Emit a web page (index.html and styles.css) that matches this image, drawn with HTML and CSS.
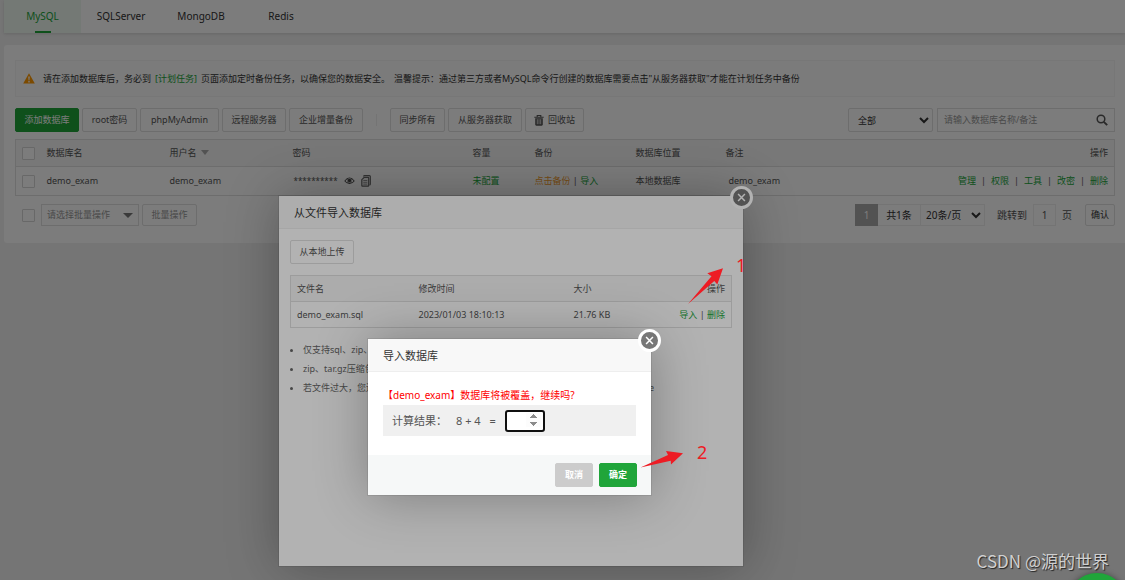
FILE: index.html
```html
<!DOCTYPE html>
<html lang="zh-CN">
<head>
<meta charset="utf-8">
<title>数据库</title>
<link rel="stylesheet" href="styles.css">
</head>
<body>
<div class="page">
  <nav class="tabs">
    <button class="tab tab-active">MySQL</button>
    <button class="tab">SQLServer</button>
    <button class="tab">MongoDB</button>
    <button class="tab">Redis</button>
  </nav>

  <main class="card">
    <div class="notice">
      <svg class="warn" viewBox="0 0 12 11"><path d="M6 .3 11.8 10.6H.2z" fill="#ff9900"/><path d="M5.2 3.6h1.6L6.4 7.4h-.8zM5.3 8.1h1.4v1.3H5.3z" fill="#fff"/></svg>
      <span>请在添加数据库后，务必到</span>
      <a class="link" href="#">[计划任务]</a>
      <span>页面添加定时备份任务，以确保您的数据安全。</span>
      <span>温馨提示：通过第三方或者MySQL命令行创建的数据库需要点击"从服务器获取"才能在计划任务中备份</span>
    </div>

    <div class="toolbar">
      <div class="actions">
        <button class="btn btn-primary">添加数据库</button>
        <button class="btn">root密码</button>
        <button class="btn">phpMyAdmin</button>
        <button class="btn">远程服务器</button>
        <button class="btn">企业增量备份</button>
        <span class="divider"></span>
        <button class="btn">同步所有</button>
        <button class="btn">从服务器获取</button>
        <button class="btn"><svg class="trash" viewBox="0 0 10 11"><path d="M3.2 1.8V.5h3.6v1.3M.3 2.3h9.4" fill="none" stroke="#555" stroke-width="1.1"/><path d="M1.2 3.2h7.6v6.4q0 1.1-1.1 1.1H2.3q-1.1 0-1.1-1.1z" fill="#555"/><path d="M3.3 4.2v5M5 4.2v5M6.7 4.2v5" stroke="#fff" stroke-width=".7"/></svg>回收站</button>
      </div>
      <div class="filters">
        <select class="select filter-type" aria-label="类型"><option>全部</option></select>
        <div class="search">
          <input type="text" aria-label="搜索" placeholder="请输入数据库名称/备注">
          <button class="search-btn" aria-label="搜索"><svg viewBox="0 0 12 12"><circle cx="5" cy="5" r="3.8" fill="none" stroke="#555" stroke-width="1.5"/><path d="m7.8 7.8 3.4 3.4" stroke="#555" stroke-width="1.9"/></svg></button>
        </div>
      </div>
    </div>

    <table class="grid main-grid">
      <colgroup><col class="c-check"><col class="c-name"><col class="c-name"><col class="c-pass"><col class="c-quota"><col class="c-backup"><col class="c-place"><col class="c-note"><col></colgroup>
      <thead>
        <tr><th><input type="checkbox" class="check" aria-label="全选"></th><th>数据库名</th><th>用户名<span class="sort"></span></th><th>密码</th><th>容量</th><th>备份</th><th>数据库位置</th><th>备注</th><th class="right">操作</th></tr>
      </thead>
      <tbody>
        <tr>
          <td><input type="checkbox" class="check" aria-label="选择 demo_exam"></td>
          <td>demo_exam</td>
          <td>demo_exam</td>
          <td><div class="password"><span class="stars">**********</span>
            <svg class="eye" viewBox="0 0 12 10"><path d="M.3 5Q6-2.600 11.700 5 6 11.800.3 5z" fill="#444"/><circle cx="6" cy="4.500" r="2.500" fill="#fff"/><circle cx="6" cy="4.500" r="1.900" fill="#444"/><path d="M1.600 5.100Q2.300 3.700 3.500 3 2.900 5 4 6.800 2.500 6.300 1.600 5.100zM10.400 5.100Q9.700 3.700 8.500 3 9.100 5 8 6.800 9.500 6.300 10.400 5.100z" fill="#fff"/></svg>
            <svg class="copy" viewBox="0 0 10 12"><path d="M2.500 1.500q0-.9.900-.9h5q.9 0 .9.900v7.400q0 .9-.9.900" fill="none" stroke="#666" stroke-width="1.200"/><path d="M3.200 2.300h3.900q.6 0 .6.600v7.700q0 .6-.6.600H1.400q-.6 0-.6-.6V4.700z" fill="#eee" stroke="#666" stroke-width="1.200"/><path d="M2.300 5.500h4M2.300 7.300h4M2.300 9.100h4" stroke="#777" stroke-width=".8"/></svg></div></td>
          <td><a class="link" href="#">未配置</a></td>
          <td><a class="link link-warn" href="#">点击备份</a> | <a class="link" href="#">导入</a></td>
          <td>本地数据库</td>
          <td class="note">demo_exam</td>
          <td><div class="ops"><a class="link" href="#">管理</a><i>|</i><a class="link" href="#">权限</a><i>|</i><a class="link" href="#">工具</a><i>|</i><a class="link" href="#">改密</a><i>|</i><a class="link" href="#">删除</a></div></td>
        </tr>
      </tbody>
    </table>

    <div class="footer">
      <div class="batch">
        <input type="checkbox" class="check" aria-label="全选">
        <button class="batch-select">请选择批量操作<span class="sort"></span></button>
        <button class="btn batch-btn">批量操作</button>
      </div>
      <div class="pager">
        <span class="page-current">1</span>
        <span class="page-total">共1条</span>
        <select class="select page-size" aria-label="每页条数"><option>20条/页</option></select>
        <label class="jump">跳转到 <input type="text" value="1"> 页</label>
        <button class="btn confirm">确认</button>
      </div>
    </div>
  </main>

  <div class="bubble"></div>
  <div class="shade"></div>

  <section class="modal import-modal">
    <button class="close" aria-label="关闭"><svg viewBox="0 0 10 10"><path d="m1.200 1.200 7.600 7.600m0-7.600L1.200 8.800" stroke="#fff" stroke-width="1.700"/></svg></button>
    <h2 class="modal-title">从文件导入数据库</h2>
    <div class="import-body">
      <button class="btn upload">从本地上传</button>
      <table class="grid file-grid">
        <colgroup><col class="f-name"><col class="f-time"><col class="f-size"><col></colgroup>
        <thead><tr><th>文件名</th><th>修改时间</th><th>大小</th><th class="right">操作</th></tr></thead>
        <tbody><tr><td>demo_exam.sql</td><td>2023/01/03 18:10:13</td><td>21.76 KB</td><td class="right"><a class="link" href="#">导入</a> | <a class="link" href="#">删除</a></td></tr></tbody>
      </table>
      <ul class="tips">
        <li>仅支持sql、zip、sql.gz</li>
        <li>zip、tar.gz压缩包结构：test.zip压缩包内必须包含test.sql</li>
        <li><div class="tip-path"><span>若文件过大，您还可以使用SFTP工具，将数据库文件上传到</span><span>/www/backup/database</span></div></li>
      </ul>
    </div>
  </section>

  <div class="shade"></div>

  <section class="modal confirm-modal">
    <button class="close" aria-label="关闭"><svg viewBox="0 0 10 10"><path d="m1.200 1.200 7.600 7.600m0-7.600L1.200 8.800" stroke="#fff" stroke-width="1.700"/></svg></button>
    <h2 class="modal-title">导入数据库</h2>
    <div class="confirm-body">
      <p class="danger">【demo_exam】数据库将被覆盖，继续吗?</p>
      <label class="sum"><span>计算结果：</span><span>8 + 4</span><span>=</span><input type="number" autofocus></label>
    </div>
    <div class="confirm-foot">
      <button class="btn btn-cancel">取消</button>
      <button class="btn btn-ok">确定</button>
    </div>
  </section>

  <svg class="arrow arrow-one" viewBox="0 0 36 38"><path d="M0 36 23.500 8.300 19.300 5.300 35 .3 29.300 16.500 26.300 13z" fill="#ed1c24"/></svg>
  <span class="mark mark-one">1</span>
  <svg class="arrow arrow-two" viewBox="0 0 44 18"><path d="M.5 16.500 28 4 26 0 43 2.200 31 13.500 30.700 9.700z" fill="#ed1c24"/></svg>
  <span class="mark mark-two">2</span>
  <span class="watermark">CSDN @源的世界</span>
</div>
</body>
</html>
```
FILE: styles.css
```css
* { box-sizing: border-box; }

body {
  margin: 0;
  background: #f1f1f1;
  color: #555;
  font: 9px/18px "Noto Sans", "Noto Sans CJK SC", sans-serif;
}

button, input, select { font: inherit; color: inherit; margin: 0; }
h2, p, ul { margin: 0; padding: 0; }
a { text-decoration: none; }

.page { position: relative; min-height: 100vh; overflow: hidden; }

.tabs {
  display: flex;
  margin-left: 4px;
  background: #fff;
  box-shadow: 0 1px 3px rgba(0, 0, 0, .12);
}
.tab {
  position: relative;
  min-width: 80px;
  height: 33px;
  padding: 0 0 2px;
  border: 0;
  background: none;
  color: #333;
  font-size: 10px;
}
.tab-active { min-width: 77px; background: #eff9f1; color: #20a53a; }
.tab-active::after {
  content: "";
  position: absolute;
  left: 50%;
  bottom: 0;
  width: 16px;
  height: 2px;
  margin-left: -8px;
  background: #20a53a;
}

.card {
  margin: 12px 0 0 4px;
  padding: 15px 10px 17px 11px;
  border-radius: 3px 0 0 3px;
  background: #fff;
}

.notice {
  display: flex;
  align-items: center;
  gap: 4px;
  min-height: 37px;
  padding: 0 7px;
  border: 1px solid #f5f5f5;
  background: #fdfdfd;
  color: #333;
  white-space: nowrap;
}
.warn { width: 12px; height: 11px; margin-right: 4px; }
.link { color: #20a53a; }
.link-warn { color: #f19b2c; }

.toolbar { display: flex; justify-content: space-between; margin-top: 11px; }
.actions {
  display: grid;
  grid-template-columns: 64px 55px 79px 64px 74px 21px 55px 74px 59px;
  gap: 3px;
}
.btn {
  display: inline-flex;
  align-items: center;
  justify-content: center;
  height: 24px;
  padding: 0;
  border: 1px solid #e0e0e0;
  border-radius: 2px;
  background: #fff;
  white-space: nowrap;
}
.btn-primary { border-color: #20a53a; background: #20a53a; color: #fff; }
.divider { width: 1px; height: 12px; margin: 6px 0 0 10px; background: #eee; }
.trash { width: 10px; height: 11px; margin-right: 4px; }

.filters { display: flex; gap: 4px; }
.select {
  height: 24px;
  padding: 0 2px 0 5px;
  border: 1px solid #e0e0e0;
  background: #fff;
  color: #333;
}
.filter-type { width: 85px; border-radius: 2px; }
.search { display: flex; width: 178px; height: 24px; border: 1px solid #e0e0e0; }
.search input { flex: 1; min-width: 0; padding: 0 6px; border: 0; background: none; outline: 0; }
.search input::placeholder { color: #999; }
.search-btn { display: flex; align-items: center; padding: 0 6px; border: 0; background: none; }
.search-btn svg { width: 12px; height: 12px; }

.grid {
  width: 100%;
  border: 1px solid #e0e0e0;
  border-collapse: collapse;
  table-layout: fixed;
}
.grid th { height: 27px; background: #f6f6f6; font-weight: 400; text-align: left; }
.grid th, .grid td { padding: 0 6px 0 5px; border-bottom: 1px solid #e0e0e0; white-space: nowrap; }
.grid td { height: 29px; }
.grid .right { text-align: right; }
.main-grid { margin-top: 7px; }
.c-check { width: 26px; }
.c-name { width: 123px; }
.c-pass { width: 180px; }
.c-quota { width: 62px; }
.c-backup { width: 101px; }
.c-place { width: 90px; }
.c-note { width: 150px; }
.grid .note { padding-left: 8px; }

.check {
  appearance: none;
  display: block;
  width: 13px;
  height: 13px;
  border: 1px solid #d6d6d6;
  border-radius: 1px;
  background: #fff;
}
.grid .check { margin-left: 1px; }
.sort {
  display: inline-block;
  margin-left: 4px;
  border: 4px solid transparent;
  border-top: 5px solid #aaa;
  border-bottom: 0;
  vertical-align: 1px;
}
.password { display: flex; align-items: center; gap: 6px; padding-left: 1px; }
.stars { height: 18px; font-size: 8px; }
.eye { width: 11px; height: 10px; }
.copy { width: 10px; height: 12px; }
.ops { display: flex; justify-content: flex-end; gap: 5px; }
.ops i { font-style: normal; }

.footer { display: flex; justify-content: space-between; margin-top: 8px; }
.batch { display: flex; align-items: center; gap: 3px; padding-left: 7px; color: #999; }
.batch-select {
  display: flex;
  align-items: center;
  justify-content: space-between;
  width: 98px;
  height: 22px;
  margin-left: 3px;
  padding: 0 5px;
  border: 1px solid #e0e0e0;
  background: #fff;
}
.batch-select .sort { border-width: 5px 5px 0; border-top-color: #777; }
.batch-btn { width: 55px; height: 22px; }
.pager { display: flex; align-items: center; font-size: 10px; color: #333; }
.pager > * { height: 22px; line-height: 20px; }
.page-current { width: 23px; border: 1px solid #aaa; background: #aaa; color: #fff; text-align: center; }
.page-total { width: 42px; border: 1px solid #f0f0f0; border-width: 1px 0; text-align: center; }
.page-size { width: 65px; padding: 0 0 0 1px; border-color: #eee; }
.jump { display: flex; align-items: center; gap: 6px; margin: 0 13px 0 12px; color: #555; }
.jump input {
  width: 23px;
  height: 22px;
  padding: 0;
  border: 1px solid #eee;
  background: none;
  text-align: center;
}
.confirm { width: 30px; font-size: 9px; }

.bubble {
  position: absolute;
  z-index: 3;
  right: -2px;
  top: 573px;
  width: 60px;
  height: 60px;
  border-radius: 50%;
  background: #20a53a;
  box-shadow: 0 0 6px rgba(0, 0, 0, .4);
}

.shade { position: absolute; inset: 0; background: rgba(0, 0, 0, .3); }

.modal {
  position: absolute;
  background: #fff;
  box-shadow: 0 0 0 1px rgba(0, 0, 0, .08), 1px 1px 50px rgba(0, 0, 0, .3);
}
.import-modal { left: 279px; top: 196px; width: 464px; min-height: 370px; }
.confirm-modal { left: 368px; top: 339px; width: 283px; }
.modal-title {
  height: 33px;
  padding: 0 15px;
  border-bottom: 1px solid #eee;
  background: #f8f8f8;
  color: #333;
  font-size: 11px;
  font-weight: 400;
  line-height: 33px;
}
.close {
  position: absolute;
  top: -10px;
  right: -10px;
  display: flex;
  align-items: center;
  justify-content: center;
  width: 23px;
  height: 23px;
  padding: 0;
  border: 3px solid #fff;
  border-radius: 50%;
  background: #777;
}
.close svg { width: 9px; height: 9px; }

.import-body { padding: 11px; }
.upload { width: 64px; }
.file-grid { margin-top: 11px; }
.file-grid th, .file-grid td { height: 26px; padding-left: 6px; }
.f-name { width: 122px; }
.f-time { width: 155px; }
.f-size { width: 82px; }
.tips { margin-top: 12px; padding-left: 13px; color: #666; line-height: 19px; white-space: nowrap; }
.tip-path { display: flex; justify-content: space-between; width: 351px; }

.confirm-body { padding: 14px 15px 19px; }
.danger { color: #f00; font-size: 10px; }
.sum {
  display: flex;
  align-items: center;
  gap: 9px;
  height: 31px;
  margin-top: 1px;
  padding: 0 9px;
  background: #f0f0f0;
  font-size: 11px;
}
.sum input {
  width: 40px;
  height: 22px;
  padding: 0 2px;
  border: 2px solid #101010;
  border-radius: 3px;
  background: #fff;
  outline: 0;
}
.sum input::-webkit-inner-spin-button { opacity: 1; }
.confirm-foot {
  display: flex;
  justify-content: flex-end;
  gap: 6px;
  padding: 8px 14px;
  background: #f6f8f8;
}
.confirm-foot .btn { width: 38px; color: #fff; font-weight: 700; }
.btn-cancel { border-color: #ccc; background: #ccc; }
.btn-ok { border-color: #20a53a; background: #20a53a; }

.arrow { position: absolute; }
.arrow-one { left: 688px; top: 268px; width: 36px; height: 38px; }
.arrow-two { left: 640px; top: 451px; width: 44px; height: 18px; }
.mark { position: absolute; color: #ed1c24; font-size: 18px; line-height: 20px; }
.mark-one { left: 736px; top: 255px; }
.mark-two { left: 697px; top: 442px; }
.watermark {
  position: absolute;
  right: 16px;
  top: 549px;
  color: #d0d0d0;
  font: 17px/24px "Noto Sans CJK SC", sans-serif;
  text-shadow: 1px 1px 1px rgba(0, 0, 0, .7);
}
```
